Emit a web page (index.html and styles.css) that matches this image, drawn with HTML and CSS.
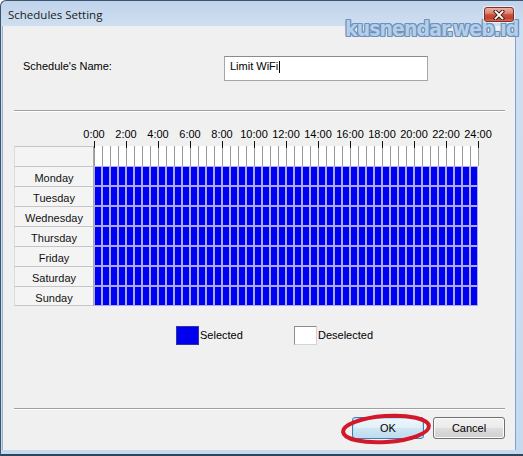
FILE: index.html
```html
<!DOCTYPE html>
<html>
<head>
<meta charset="utf-8">
<title>Schedules Setting</title>
<link rel="stylesheet" href="styles.css">
</head>
<body>
<div class="window">
  <div class="titlebar">
    <span class="title">Schedules Setting</span>
    <button class="close" aria-label="Close">
      <svg width="12" height="10" viewBox="0 0 12 10">
        <path d="M2.5 1.5 L9.5 8.5 M9.5 1.5 L2.5 8.5" stroke="#3a1510" stroke-width="3.6" stroke-linecap="square" fill="none"/>
        <path d="M2.5 1.5 L9.5 8.5 M9.5 1.5 L2.5 8.5" stroke="#ffffff" stroke-width="1.8" stroke-linecap="square" fill="none"/>
      </svg>
    </button>
  </div>
  <div class="watermark">kusnendar.web.id</div>
  <div class="client">
    <div class="name-row">
      <span class="name-label">Schedule's Name:</span>
      <div class="textbox">Limit WiFi<span class="caret"></span></div>
    </div>
    <div class="sep"></div>
    <div class="hours">
      <span>0:00</span><span>2:00</span><span>4:00</span><span>6:00</span><span>8:00</span><span>10:00</span><span>12:00</span><span>14:00</span><span>16:00</span><span>18:00</span><span>20:00</span><span>22:00</span><span>24:00</span>
    </div>
    <div class="tickrow">
      <div class="corner"></div>
      <div class="ticks"></div>
    </div>
    <div class="day"><div class="day-label">Monday</div><div class="slots"></div></div>
    <div class="day"><div class="day-label">Tuesday</div><div class="slots"></div></div>
    <div class="day"><div class="day-label">Wednesday</div><div class="slots"></div></div>
    <div class="day"><div class="day-label">Thursday</div><div class="slots"></div></div>
    <div class="day"><div class="day-label">Friday</div><div class="slots"></div></div>
    <div class="day"><div class="day-label">Saturday</div><div class="slots"></div></div>
    <div class="day last"><div class="day-label">Sunday</div><div class="slots"></div></div>
    <div class="legend">
      <div class="legend-item first"><span class="swatch sel"></span><span>Selected</span></div>
      <div class="legend-item"><span class="swatch desel"></span><span>Deselected</span></div>
    </div>
    <div class="sep sep-bottom"></div>
    <div class="buttons">
      <button class="btn default">OK</button>
      <button class="btn">Cancel</button>
    </div>
  </div>
  <svg class="mark" width="96" height="34" viewBox="0 0 96 34">
    <ellipse cx="48" cy="17" rx="43" ry="13" transform="rotate(-4 48 17)" fill="none" stroke="#d2182a" stroke-width="4"/>
  </svg>
</div>
</body>
</html>
```
FILE: styles.css
```css
* { box-sizing: border-box; }

body {
  margin: 0;
  background: #ffffff;
  font-family: "Liberation Sans", Arial, sans-serif;
  font-size: 11px;
  color: #000;
}

.window {
  position: relative;
  width: 523px;
  height: 456px;
  display: flex;
  flex-direction: column;
  border-top: 1px solid #3a5570;
  border-left: 1px solid #3a5570;
  border-bottom: 2px solid #2e4458;
  border-top-left-radius: 6px;
  padding: 0 7px 4px 1px;
  background: linear-gradient(to bottom, #bfd3ea 0, #cfdff1 24px, #c6daef 100%);
  overflow: hidden;
}

.titlebar {
  height: 25px;
  flex-shrink: 0;
  display: flex;
  align-items: flex-start;
}

.title {
  font-family: "Open Sans", "Noto Sans", sans-serif;
  font-size: 11.5px;
  line-height: 16px;
  margin: 6px 0 0 6px;
  color: #1a1a1a;
}

.close {
  position: relative;
  z-index: 4;
  margin: 6px 2px 0 auto;
  width: 30px;
  height: 15px;
  padding: 0;
  border: 1px solid #7a3126;
  border-radius: 3px;
  background: linear-gradient(to bottom, #eab0a3 0%, #db8474 40%, #c9503b 52%, #c4412d 80%, #d5705a 100%);
  box-shadow: 0 0 0 1px rgba(255, 255, 255, 0.6);
  display: flex;
  align-items: center;
  justify-content: center;
}

.watermark {
  position: absolute;
  left: 344px;
  top: 18px;
  z-index: 2;
  font-family: "DejaVu Sans Condensed", "DejaVu Sans", sans-serif;
  font-weight: bold;
  font-size: 21px;
  line-height: 20px;
  letter-spacing: -0.9px;
  white-space: nowrap;
  color: #b3cfeb;
  text-shadow: 1px 0 #6f91b9, -1px 0 #6f91b9, 0 1px #6f91b9, 0 -1px #6f91b9,
    1px 1px #6f91b9, -1px -1px #6f91b9, 1px -1px #6f91b9, -1px 1px #6f91b9;
}

.client {
  flex: 1;
  background: #f0f0f0;
  border-left: 1px solid #9fb3c8;
  border-right: 1px solid #7fa3cc;
  padding: 0 10px 0 11px;
  display: flex;
  flex-direction: column;
}

.name-row {
  display: flex;
  margin-top: 30px;
  height: 25px;
}

.name-label {
  width: 210px;
  padding: 4px 0 0 9px;
  line-height: 13px;
}

.textbox {
  width: 204px;
  height: 25px;
  background: #fff;
  border: 1px solid #a4a6ab;
  border-top-color: #8a8b8d;
  padding: 3px 5px 0;
  line-height: 13px;
}

.caret {
  display: inline-block;
  width: 1px;
  height: 12px;
  background: #000;
  margin-left: 1px;
  vertical-align: -3px;
}

.sep {
  margin-top: 29px;
  height: 2px;
  border-top: 1px solid #a0a0a0;
  border-bottom: 1px solid #ffffff;
  flex-shrink: 0;
}

.hours {
  display: flex;
  margin-top: 16px;
  padding-left: 64px;
  line-height: 13px;
}

.hours span {
  width: 32px;
  flex-shrink: 0;
  text-align: center;
}

.tickrow {
  display: flex;
  height: 25px;
}

.corner {
  width: 80px;
  margin-top: 5px;
  background: #f4f4f4;
  border-top: 1px solid #c6c6c6;
  border-left: 1px solid #dcdcdc;
  border-right: 1px solid #a8a8a8;
}

.ticks {
  width: 385px;
  background:
    repeating-linear-gradient(to right, #111 0 1px, transparent 1px 32px) 0 0 / 100% 7px no-repeat,
    repeating-linear-gradient(to right, #9a9a9a 0 1px, transparent 1px 8px) 0 5px / 100% 20px no-repeat,
    linear-gradient(#ffffff, #ffffff) 0 5px / 100% 20px no-repeat;
}

.day {
  display: flex;
  height: 20px;
}

.day-label {
  width: 80px;
  height: 20px;
  text-align: center;
  padding-top: 2px;
  line-height: 18px;
  background: #f4f4f4;
  border-top: 1px solid #c6c6c6;
  border-left: 1px solid #dcdcdc;
  border-right: 1px solid #a8a8a8;
  color: #111;
}

.day.last .day-label {
  border-bottom: 1px solid #c6c6c6;
}

.slots {
  width: 384px;
  background:
    repeating-linear-gradient(to right, #aaaaf4 0 1px, transparent 1px 7px, #aaaaf4 7px 8px),
    linear-gradient(to bottom, #aaaaf4 0 1px, #0000f0 1px 19px, #aaaaf4 19px 20px);
}

.legend {
  display: flex;
  margin-top: 20px;
  padding-left: 162px;
  height: 19px;
}

.legend-item {
  display: flex;
  align-items: center;
  line-height: 13px;
}

.legend-item.first {
  width: 118px;
}

.swatch {
  width: 23px;
  height: 19px;
  margin-right: 1px;
  border: 1px solid;
}

.swatch.sel {
  background: #0000ee;
  border-color: #3434a0;
}

.swatch.desel {
  background: #ffffff;
  border-color: #8c8c8c #d4d4d4 #d4d4d4 #8c8c8c;
}

.sep-bottom {
  margin-top: 63px;
}

.buttons {
  display: flex;
  justify-content: flex-end;
  gap: 9px;
  margin-top: 7px;
}

.btn {
  width: 72px;
  height: 22px;
  padding: 0;
  font-family: "Liberation Sans", Arial, sans-serif;
  font-size: 11px;
  line-height: 20px;
  color: #000;
  text-align: center;
  border: 1px solid #707070;
  border-radius: 3px;
  background: linear-gradient(to bottom, #f2f2f2 0%, #ebebeb 48%, #dddddd 52%, #cfcfcf 100%);
  box-shadow: inset 0 0 0 1px #fbfbfb;
}

.btn.default {
  border-color: #3c7fb1;
  box-shadow: inset 0 0 0 1px #b6e1f8;
  background: linear-gradient(to bottom, #edf6fb 0%, #e3f0f8 48%, #cfe6f4 52%, #c0dbee 100%);
}

.mark {
  position: absolute;
  left: 337px;
  top: 411px;
  z-index: 3;
}
```
